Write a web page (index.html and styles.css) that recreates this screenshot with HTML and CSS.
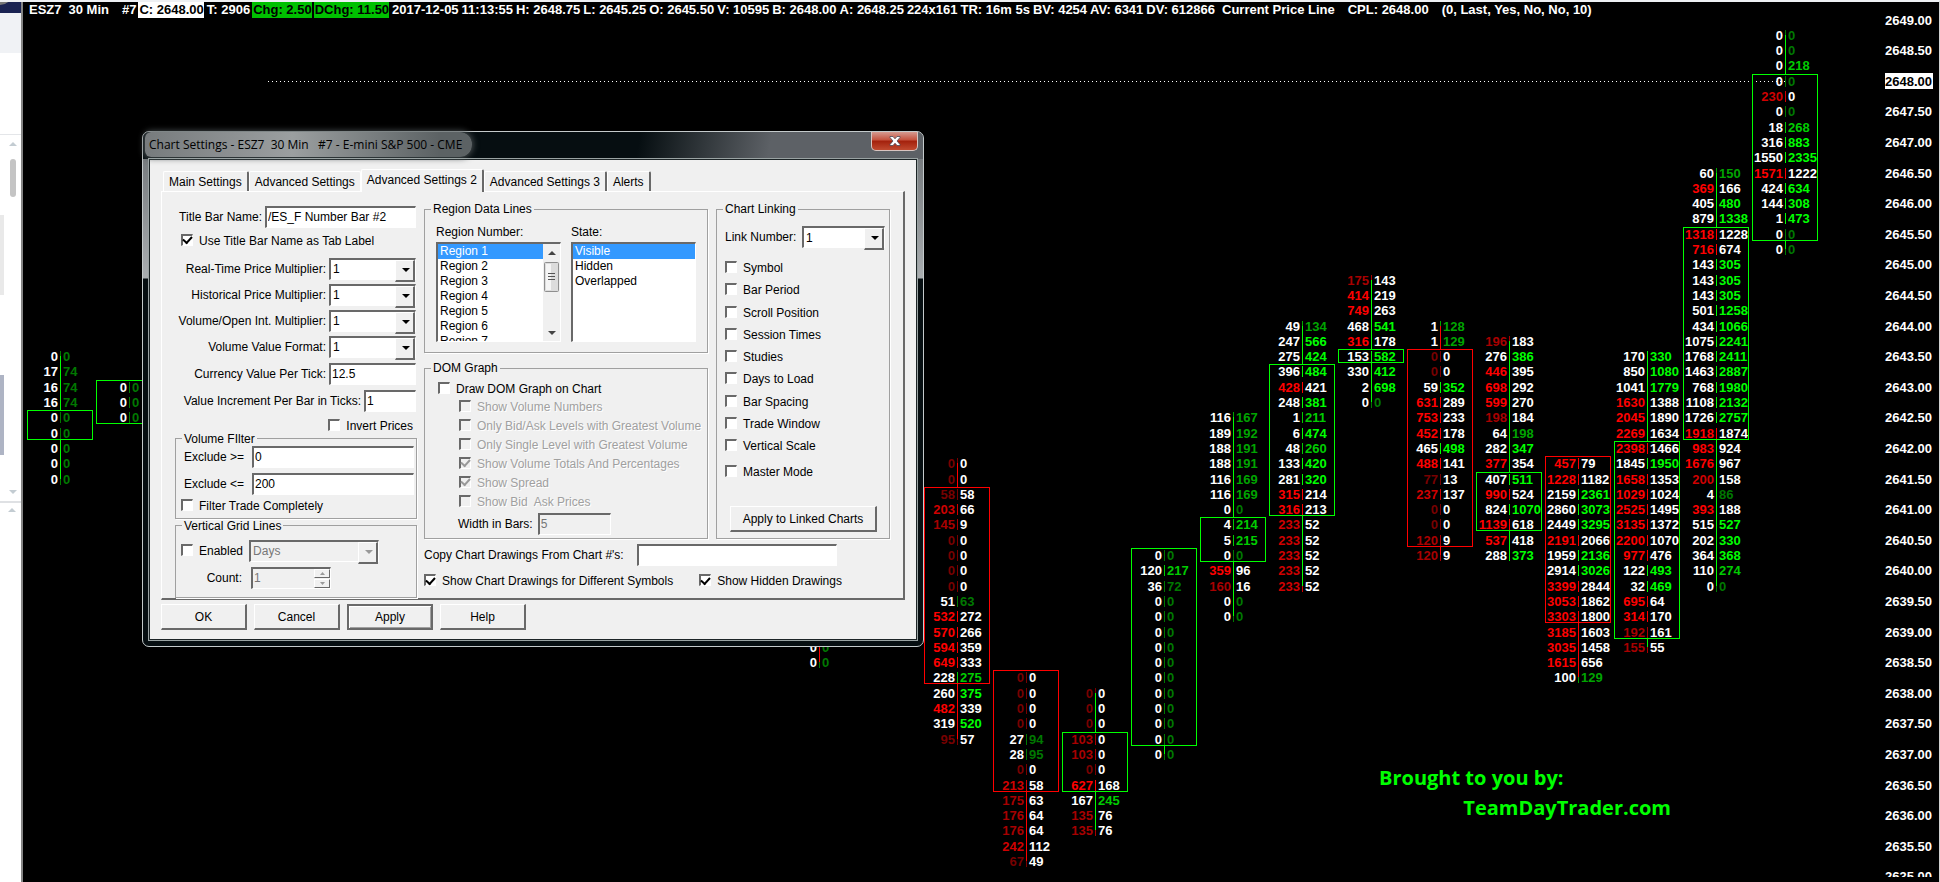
FILE: index.html
```html
<!DOCTYPE html>
<html lang="en">
<head>
    <meta charset="UTF-8">
    <meta name="viewport" content="width=device-width, initial-scale=1.0">
    <title>ESZ7 30 Min #7</title>
    <link rel="stylesheet" href="styles.css">
</head>
<body>
    <div class="desktop">
        <aside class="browser-edge">
            <svg width="21" height="882" viewBox="0 0 21 882">
                <rect width="21" height="11" fill="#1a2352"/>
                <circle cx="0" cy="-10" r="13" fill="#777"/>
                <rect y="11" width="21" height="40" fill="#f0f2f5"/>
                <rect y="132" width="21" height="1" fill="#e4e6e9"/>
                <path d="M9 144l4-4 4 4z" fill="#c3ccd2"/>
                <rect x="10" y="157" width="6" height="38" rx="3" fill="#c4c4c4"/>
                <rect y="213" width="4" height="80" fill="#e9e9e9"/>
                <rect y="373" width="4" height="80" fill="#aeb4c4"/>
                <path d="M9 488l4 4 4-4z" fill="#c3ccd2"/>
                <rect y="499" width="21" height="2" fill="#dfe1e4"/>
                <path d="M8 510l4-4 4 4z" fill="#c3ccd2"/>
            </svg>
        </aside>

        <main class="chart">
            <header class="status-line">
                <span>ESZ7</span><span class="wide">30 Min</span><span class="far">#7</span>
                <span class="tag last">C: 2648.00</span><span>T: 2906</span>
                <span class="tag up">Chg: 2.50</span><span class="tag up">DChg: 11.50</span>
                <span>2017-12-05</span><span>11:13:55</span><span>H: 2648.75</span><span>L: 2645.25</span><span>O: 2645.50</span><span>V: 10595</span><span>B: 2648.00</span><span>A: 2648.25</span><span>224x161</span><span>TR: 16m 5s</span><span>BV: 4254</span><span>AV: 6341</span><span>DV: 612866</span>
                <span class="wide">Current Price Line</span><span class="far">CPL: 2648.00</span><span class="far">(0, Last, Yes, No, No, 10)</span>
            </header>
            <svg class="bars" id="bars"></svg>
            <svg class="axis" id="axis"></svg>
            <div class="credit">
                <p>Brought to you by:</p>
                <p class="site">TeamDayTrader.com</p>
            </div>
        </main>
    </div>

    <div class="dialog" role="dialog" aria-labelledby="dialogTitle">
        <div class="title-bar">
            <span class="title" id="dialogTitle">Chart Settings - ESZ7&nbsp; 30 Min&nbsp;&nbsp; #7 - E-mini S&amp;P 500 - CME</span>
            <button type="button" class="close" aria-label="Close">
                <svg width="12" height="10" viewBox="0 0 12 10"><path d="M1 .5h3l2 2.300 2-2.300h3v1L8 5l3 3.500v1H8L6 7.200 4 9.500H1v-1L4 5 1 1.500z" fill="#fff" stroke="#4a4a58" stroke-width=".8"/></svg>
            </button>
        </div>
        <form class="client">
            <nav class="tabs">
                <button type="button" class="tab">Main Settings</button>
                <button type="button" class="tab">Advanced Settings</button>
                <button type="button" class="tab active">Advanced Settings 2</button>
                <button type="button" class="tab">Advanced Settings 3</button>
                <button type="button" class="tab">Alerts</button>
            </nav>

            <div class="panel">
                <div class="general">
                    <div class="row">
                        <label for="titleBar">Title Bar Name:</label>
                        <input class="field title-field" type="text" id="titleBar" value="/ES_F Number Bar #2">
                    </div>
                    <label class="check title-check"><input type="checkbox" checked>Use Title Bar Name as Tab Label</label>
                    <div class="row">
                        <label for="rtMult">Real-Time Price Multiplier:</label>
                        <span class="combo short"><select id="rtMult"><option>1</option></select></span>
                    </div>
                    <div class="row">
                        <label for="histMult">Historical Price Multiplier:</label>
                        <span class="combo short"><select id="histMult"><option>1</option></select></span>
                    </div>
                    <div class="row">
                        <label for="volMult">Volume/Open Int. Multiplier:</label>
                        <span class="combo short"><select id="volMult"><option>1</option></select></span>
                    </div>
                    <div class="row">
                        <label for="volFormat">Volume Value Format:</label>
                        <span class="combo short"><select id="volFormat"><option>1</option></select></span>
                    </div>
                    <div class="row text-row">
                        <label for="tickValue">Currency Value Per Tick:</label>
                        <input class="field short" type="text" id="tickValue" value="12.5">
                    </div>
                    <div class="row text-row">
                        <label for="increment">Value Increment Per Bar in Ticks:</label>
                        <input class="field tiny" type="text" id="increment" value="1">
                    </div>
                    <label class="check invert"><input type="checkbox">Invert Prices</label>
                    <fieldset class="volume-filter">
                        <legend>Volume FIlter</legend>
                        <div class="row">
                            <label for="excludeMin">Exclude &gt;=</label>
                            <input class="field" type="text" id="excludeMin" value="0">
                        </div>
                        <div class="row">
                            <label for="excludeMax">Exclude &lt;=</label>
                            <input class="field" type="text" id="excludeMax" value="200">
                        </div>
                        <label class="check"><input type="checkbox">Filter Trade Completely</label>
                    </fieldset>
                    <fieldset class="grid-lines">
                        <legend>Vertical Grid Lines</legend>
                        <div class="row">
                            <label class="check"><input type="checkbox">Enabled</label>
                            <span class="combo disabled"><select aria-label="Grid line unit" disabled><option>Days</option></select></span>
                        </div>
                        <div class="row">
                            <label class="count-label" for="count">Count:</label>
                            <span class="spinner">
                                <input class="field" type="text" id="count" value="1" disabled>
                                <span class="spin-buttons">
                                    <button type="button" aria-label="Up" disabled><svg width="5" height="3" viewBox="0 0 5 3"><path d="M0 3l2.500-3L5 3z" fill="#999"/></svg></button>
                                    <button type="button" aria-label="Down" disabled><svg width="5" height="3" viewBox="0 0 5 3"><path d="M0 0l2.500 3L5 0z" fill="#999"/></svg></button>
                                </span>
                            </span>
                        </div>
                    </fieldset>
                </div>

                <div class="extras">
                    <div class="groups">
                        <div class="middle">
                            <fieldset class="regions">
                                <legend>Region Data Lines</legend>
                                <div class="list-group">
                                    <label for="region">Region Number:</label>
                                    <div class="list">
                                        <select id="region" size="7">
                                            <option selected>Region 1</option>
                                            <option>Region 2</option>
                                            <option>Region 3</option>
                                            <option>Region 4</option>
                                            <option>Region 5</option>
                                            <option>Region 6</option>
                                            <option>Region 7</option>
                                        </select>
                                        <svg class="scroll" width="17" height="97" viewBox="0 0 17 97">
                                            <rect width="17" height="97" fill="#f0f0f0"/>
                                            <path d="M5 11l4-4 4 4z M5 87l4 4 4-4z" fill="#444"/>
                                            <rect x="1.500" y="18.500" width="14" height="29" rx="1" fill="#dcdcdc" stroke="#8f8f8f"/>
                                            <path d="M3 20h5v26H3z" fill="#f5f5f5"/>
                                            <path d="M5 29.500h7M5 32.500h7M5 35.500h7" stroke="#555"/>
                                        </svg>
                                    </div>
                                </div>
                                <div class="list-group">
                                    <label for="state">State:</label>
                                    <div class="list">
                                        <select id="state" size="7">
                                            <option selected>Visible</option>
                                            <option>Hidden</option>
                                            <option>Overlapped</option>
                                        </select>
                                    </div>
                                </div>
                            </fieldset>
                            <fieldset class="dom">
                                <legend>DOM Graph</legend>
                                <label class="check"><input type="checkbox">Draw DOM Graph on Chart</label>
                                <div class="dom-options">
                                    <label class="check"><input type="checkbox" disabled>Show Volume Numbers</label>
                                    <label class="check"><input type="checkbox" disabled>Only Bid/Ask Levels with Greatest Volume</label>
                                    <label class="check"><input type="checkbox" disabled>Only Single Level with Greatest Volume</label>
                                    <label class="check"><input type="checkbox" disabled checked>Show Volume Totals And Percentages</label>
                                    <label class="check"><input type="checkbox" disabled checked>Show Spread</label>
                                    <label class="check"><input type="checkbox" disabled>Show Bid&nbsp; Ask Prices</label>
                                </div>
                                <div class="dom-width">
                                    <label for="domWidth">Width in Bars:</label>
                                    <input class="field" type="text" id="domWidth" value="5" disabled>
                                </div>
                            </fieldset>
                        </div>

                        <fieldset class="linking">
                            <legend>Chart Linking</legend>
                            <div class="row">
                                <label for="linkNumber">Link Number:</label>
                                <span class="combo"><select id="linkNumber"><option>1</option></select></span>
                            </div>
                            <div class="link-options">
                                <label class="check"><input type="checkbox">Symbol</label>
                                <label class="check"><input type="checkbox">Bar Period</label>
                                <label class="check"><input type="checkbox">Scroll Position</label>
                                <label class="check"><input type="checkbox">Session Times</label>
                                <label class="check"><input type="checkbox">Studies</label>
                                <label class="check"><input type="checkbox">Days to Load</label>
                                <label class="check"><input type="checkbox">Bar Spacing</label>
                                <label class="check"><input type="checkbox">Trade Window</label>
                                <label class="check"><input type="checkbox">Vertical Scale</label>
                            </div>
                            <label class="check master"><input type="checkbox">Master Mode</label>
                            <button type="button" class="btn link-btn">Apply to Linked Charts</button>
                        </fieldset>
                    </div>
                    <div class="copy-row">
                        <label for="copyFrom">Copy Chart Drawings From Chart #'s:</label>
                        <input class="field" type="text" id="copyFrom">
                    </div>
                    <div class="drawing-row">
                        <label class="check"><input type="checkbox" checked>Show Chart Drawings for Different Symbols</label>
                        <label class="check"><input type="checkbox" checked>Show Hidden Drawings</label>
                    </div>
                </div>
            </div>

            <div class="actions">
                <button type="button" class="btn">OK</button>
                <button type="button" class="btn">Cancel</button>
                <button type="button" class="btn default">Apply</button>
                <button type="button" class="btn">Help</button>
            </div>
        </form>
    </div>

    <script src="chart.js"></script>
</body>
</html>
```

FILE: styles.css
```css
:root {
    --face: #f0f0f0;
    --shadow: #a0a0a0;
    --dark: #696969;
    --blue: #3399ff;
    --up: #00ff00;
    --down: #ff0000;
}
* {
    box-sizing: border-box;
}
body {
    margin: 0;
    height: 100vh;
    overflow: hidden;
    background: #000;
    font-family: "Liberation Sans", Arial, sans-serif;
    font-size: 12px;
    line-height: 14px;
}
.desktop {
    display: flex;
    height: 100vh;
    border-top: 2px solid #eef0f3;
    border-right: 1px solid #d0d0d0;
}
.browser-edge {
    width: 23px;
    flex: none;
    background: #fff;
    border-right: 2px solid #858585;
    overflow: hidden;
}
.browser-edge svg {
    display: block;
}

/* chart */
.chart {
    flex: 1;
    position: relative;
    display: flex;
    margin-bottom: 5px;
    overflow: hidden;
    color: #fff;
    font-size: 13px;
    font-weight: bold;
}
.bars {
    flex: 1;
    height: 100%;
}
.axis {
    width: 64px;
    height: 100%;
}
.status-line {
    position: absolute;
    top: 0;
    left: 6px;
    display: flex;
    gap: 3px;
    line-height: 16px;
    white-space: nowrap;
}
.status-line .wide {
    margin-left: 4px;
}
.status-line .far {
    margin-left: 10px;
}
.tag {
    margin-left: -1px;
    padding-left: 1px;
}
.tag.last {
    background: #fff;
    color: #000;
}
.tag.up {
    background: #00c000;
    color: #000;
}
.bars text, .axis text {
    fill: #fff;
}
.axis .current {
    fill: #000;
}
.axis text, .bars .bid {
    text-anchor: end;
}
.red0 { fill: #780000 !important; }
.red1 { fill: #a80000 !important; }
.red2 { fill: #d00000 !important; }
.red3 { fill: #ff0000 !important; }
.green0 { fill: #007800 !important; }
.green1 { fill: #00a400 !important; }
.green2 { fill: #00cc00 !important; }
.green3 { fill: #00ff00 !important; }
.body-box {
    fill: none;
}
.body-box.up { stroke: var(--up); }
.body-box.down { stroke: var(--down); }
.wick.up { fill: var(--up); }
.wick.down { fill: var(--down); }
.price-line {
    stroke: #fff;
    stroke-dasharray: 1 3;
}
.credit {
    position: absolute;
    right: 268px;
    bottom: 54px;
    width: 292px;
    color: var(--up);
    font: bold 20px/30px "Open Sans", sans-serif;
}
.credit p {
    margin: 0;
}
.credit .site {
    text-align: right;
}

/* dialog window */
.dialog {
    position: absolute;
    left: 142px;
    top: 131px;
    width: 782px;
    padding: 0 6px 6px;
    border: 1px solid #c4cacb;
    border-radius: 7px;
    background: linear-gradient(#6d7275 0, #85898c 60px, #a9adb0 146px, #060e11 147px);
}
.title-bar {
    display: flex;
    justify-content: space-between;
    align-items: flex-start;
    height: 27px;
    margin: 0 -6px;
    padding: 0 5px 0 2px;
    border-radius: 6px 6px 0 0;
    background: linear-gradient(100deg, #060e11 0, #060e11 490px, #5d6166 620px, #5d6166 100%);
}
.title {
    padding: 0 10px 0 4px;
    border-radius: 6px 12px 12px 6px;
    background: linear-gradient(90deg, #777b7d, #9b9fa0 45%, #5c6264 90%);
    box-shadow: 0 0 6px 1px #4c5254;
    font: 12px/25px "Open Sans", sans-serif;
    color: #000;
}
.close {
    width: 47px;
    height: 19px;
    padding: 0;
    border: 1px solid #d8c4c0;
    border-top: 0;
    border-radius: 0 0 5px 5px;
    background: linear-gradient(#d59a90 0, #c4503c 45%, #a3200c 50%, #c04a30 100%);
    line-height: 0;
}
.client {
    padding: 9px 11px 9px;
    border: 1px solid #1c2426;
    outline: 1px solid #9aa3a3;
    background: var(--face);
}
.tabs {
    display: flex;
    align-items: flex-end;
    padding-left: 2px;
}
.tab {
    height: 20px;
    padding: 0 5px;
    border: 1px solid #fff;
    border-right: 2px solid var(--dark);
    border-bottom: 0;
    border-radius: 2px 2px 0 0;
    background: var(--face);
    font: 12px/20px "Liberation Sans", Arial, sans-serif;
    color: #000;
}
.tab:nth-child(2) {
    border-right-width: 1px;
    border-right-color: #fff;
}
.tab.active {
    position: relative;
    height: 23px;
    margin-bottom: -1px;
    padding: 0 5px 3px;
}
.panel {
    display: flex;
    gap: 7px;
    height: 409px;
    padding: 10px 13px 0;
    border: 1px solid #fff;
    border-right: 2px solid var(--dark);
    border-bottom: 2px solid var(--dark);
}
.general {
    width: 242px;
    display: flex;
    flex-direction: column;
}
.extras {
    flex: 1;
}
.row {
    display: flex;
    align-items: center;
    justify-content: flex-end;
    gap: 3px;
    height: 22px;
    margin-bottom: 4px;
}
.general > .row {
    padding-right: 1px;
}
.general > .row:first-child {
    margin: 4px 0 3px;
}
.general > .text-row {
    margin-top: 1px;
}
.field, .combo, .list {
    border: 1px solid #fff;
    border-top: 2px solid var(--dark);
    border-left: 2px solid var(--dark);
    background: #fff;
}
.field {
    height: 22px;
    padding: 0 1px 1px;
    font: 12px/14px "Liberation Sans", Arial, sans-serif;
    color: #000;
    border-radius: 0;
}
.field:disabled {
    background: var(--face);
    color: #777;
}
.title-field { width: 151px; }
.short { width: 87px; }
.tiny { width: 52px; }
.combo {
    position: relative;
    display: flex;
    height: 22px;
}
.combo select {
    appearance: none;
    width: 100%;
    padding: 0 2px;
    border: 0;
    border-radius: 0;
    background: transparent;
    font: 12px/14px "Liberation Sans", Arial, sans-serif;
    color: #000;
    outline: none;
}
.combo::before {
    content: "";
    position: absolute;
    top: 0;
    right: 0;
    width: 17px;
    height: 19px;
    border: 1px solid #fff;
    border-right: 2px solid var(--dark);
    border-bottom: 2px solid var(--dark);
    background: var(--face);
    pointer-events: none;
}
.combo::after {
    content: "";
    position: absolute;
    top: 8px;
    right: 5px;
    border: 4px solid transparent;
    border-top-color: #000;
    border-bottom: 0;
    pointer-events: none;
}
.combo.disabled {
    background: var(--face);
}
.combo.disabled select {
    color: #777;
    opacity: 1;
}
.combo.disabled::after {
    border-top-color: #999;
}
.check {
    display: flex;
    align-items: center;
    gap: 6px;
}
.check input {
    appearance: none;
    width: 12px;
    height: 12px;
    margin: 0 0 2px;
    border: 1px solid #fff;
    border-top: 2px solid var(--dark);
    border-left: 2px solid var(--dark);
    background: #fff;
    display: grid;
    place-items: center;
}
.check input:checked::before {
    content: "";
    width: 7px;
    height: 4px;
    border-left: 2px solid #000;
    border-bottom: 2px solid #000;
    transform: translateY(-1px) rotate(-48deg);
}
.check input:disabled {
    background: var(--face);
}
.check input:disabled::before {
    border-color: #999;
}
.check:has(input:disabled) {
    color: #a0a0a0;
    text-shadow: 1px 1px #fff;
}
.title-check {
    height: 16px;
    margin: 2px 0 9px 6px;
}
.invert {
    align-self: flex-end;
    margin: 3px 4px 0 0;
    height: 14px;
}
fieldset {
    --pad: 8px;
    min-width: 0;
    margin: 0;
    padding: 0 0 0 var(--pad);
    border: 1px solid var(--shadow);
    box-shadow: 1px 1px #fff;
}
legend {
    margin-left: calc(6px - var(--pad));
    padding: 0 2px;
    line-height: 14px;
}
.volume-filter {
    height: 88px;
    margin-top: -1px;
    padding-right: 2px;
}
.volume-filter .row {
    justify-content: space-between;
    margin-bottom: 5px;
}
.volume-filter .field {
    width: 162px;
}
.volume-filter .check {
    margin: -1px 0 0 -3px;
}
.grid-lines {
    --pad: 5px;
    height: 80px;
    padding-top: 7px;
}
.grid-lines .row {
    justify-content: flex-start;
    gap: 6px;
    margin-bottom: 5px;
}
.grid-lines .combo {
    width: 130px;
}
.count-label {
    width: 61px;
    text-align: right;
}
.spinner {
    position: relative;
    margin-left: 3px;
}
.spinner .field {
    display: block;
    width: 80px;
}
.spin-buttons {
    position: absolute;
    top: 2px;
    right: 1px;
    display: grid;
    gap: 1px;
}
.spin-buttons button {
    display: grid;
    place-items: center;
    width: 16px;
    height: 9px;
    padding: 0;
    border: 1px solid #fff;
    border-right-color: var(--dark);
    border-bottom-color: var(--dark);
    background: var(--face);
}
.groups {
    display: flex;
    justify-content: space-between;
}
.middle {
    width: 284px;
}
.regions {
    --pad: 11px;
    display: flex;
    gap: 10px;
    height: 151px;
    padding-top: 9px;
}
.list-group {
    width: 125px;
}
.list {
    display: flex;
    height: 100px;
    margin-top: 3px;
    overflow: hidden;
}
.list select {
    flex: 1;
    min-width: 0;
    height: 106px;
    padding: 0;
    border: 0;
    border-radius: 0;
    background: #fff;
    font: 12px/15px "Liberation Sans", Arial, sans-serif;
    color: #000;
    overflow: hidden;
    outline: none;
}
.list option {
    min-height: 15px;
    padding: 0 2px;
}
.list option:checked {
    background: linear-gradient(var(--blue), var(--blue));
    color: #fff;
}
.scroll {
    flex: none;
}
.dom {
    --pad: 13px;
    height: 178px;
    margin-top: 8px;
    padding-top: 6px;
}
.dom .check {
    height: 15px;
}
.dom-options {
    display: grid;
    gap: 4px;
    margin: 3px 0 0 21px;
    white-space: nowrap;
}
.dom-width {
    display: flex;
    align-items: center;
    gap: 5px;
    margin: 4px 0 0 20px;
}
.dom-width .field {
    width: 73px;
}
.linking {
    width: 174px;
    height: 337px;
    padding-top: 10px;
    padding-right: 4px;
}
.linking .row {
    justify-content: space-between;
}
.linking .combo {
    width: 83px;
}
.link-options {
    display: flex;
    flex-direction: column;
    justify-content: space-between;
    height: 192px;
    margin-top: 13px;
}
.master {
    margin: 12px 0 27px;
}
.btn {
    width: 86px;
    height: 26px;
    padding: 0;
    border: 1px solid #fff;
    border-right: 2px solid var(--dark);
    border-bottom: 2px solid var(--dark);
    background: var(--face);
    font: 12px/14px "Liberation Sans", Arial, sans-serif;
    color: #000;
}
.btn.default {
    border: 2px solid var(--dark);
    box-shadow: inset 1px 1px #fff, inset -1px -1px var(--shadow);
}
.link-btn {
    display: block;
    width: 147px;
    margin-left: 5px;
}
.copy-row {
    display: flex;
    align-items: center;
    gap: 13px;
    margin-top: 5px;
}
.copy-row .field {
    width: 200px;
}
.drawing-row {
    display: flex;
    gap: 26px;
    margin-top: 8px;
}
.actions {
    display: flex;
    gap: 7px;
    margin-top: 4px;
}
```

FILE: chart.js
```javascript
const NS = 'http://www.w3.org/2000/svg';
const TOP_PRICE = 2649;
const TICK = 0.25;
const ROW = 15.3;
const FIRST_Y = 18;
const BAR_STEP = 69;
const FIRST_X = 37;

// slot, side, first row, body rows, "bid|ask" per row going down
const bars = [
    { slot: 0, up: true, row: 22, body: [26, 27], cells: '0|0 17|74 16|74 16|74 0|0 0|0 0|0 0|0 0|0' },
    { slot: 1, up: true, row: 24, body: [24, 26], cells: '0|0 0|0 0|0' },
    { slot: 11, up: false, zeroUp: true, row: 38, body: [38, 38], cells: '0|0 0|0 0|0 0|0 0|0' },
    { slot: 13, up: false, row: 29, body: [31, 43], cells: '0|0 0|0 58|58 203|66 145|9 0|0 0|0 0|0 0|0 51|63 532|272 570|266 594|359 649|333 228|275 260|375 482|339 319|520 95|57' },
    { slot: 14, up: false, row: 43, body: [43, 50], cells: '0|0 0|0 0|0 0|0 27|94 28|95 0|0 213|58 175|63 176|64 176|64 242|112 67|49' },
    { slot: 15, up: true, zeroUp: false, row: 44, body: [47, 50], cells: '0|0 0|0 0|0 103|0 103|0 0|0 627|168 167|245 135|76 135|76' },
    { slot: 16, up: true, row: 35, body: [35, 47], cells: '0|0 120|217 36|72 0|0 0|0 0|0 0|0 0|0 0|0 0|0 0|0 0|0 0|0 0|0' },
    { slot: 17, up: true, row: 26, body: [33, 35], cells: '116|167 189|192 188|191 188|191 116|169 116|169 0|0 4|214 5|215 0|0 359|96 160|16 0|0 0|0' },
    { slot: 18, up: true, row: 20, body: [23, 32], cells: '49|134 247|566 275|424 396|484 428|421 248|381 1|211 6|474 48|260 133|420 281|320 315|214 316|213 233|52 233|52 233|52 233|52 233|52' },
    { slot: 19, up: true, row: 17, body: [22, 22], cells: '175|143 414|219 749|263 468|541 316|178 153|582 330|412 2|698 0|0' },
    { slot: 20, up: false, row: 20, body: [22, 34], cells: '1|128 1|129 0|0 0|0 59|352 631|289 753|233 452|178 465|498 488|141 77|13 237|137 0|0 0|0 120|9 120|9' },
    { slot: 21, up: true, row: 21, body: [30, 33], cells: '196|183 276|386 446|395 698|292 599|270 198|184 64|198 282|347 377|354 407|511 990|524 824|1070 1139|618 537|418 288|373' },
    { slot: 22, up: false, row: 29, body: [29, 39], cells: '457|79 1228|1182 2159|2361 2860|3073 2449|3295 2191|2066 1959|2136 2914|3026 3399|2844 3053|1862 3303|1800 3185|1603 3035|1458 1615|656 100|129' },
    { slot: 23, up: true, row: 22, body: [28, 40], cells: '170|330 850|1080 1041|1779 1630|1388 2045|1890 2269|1634 2398|1466 1845|1950 1658|1353 1029|1024 2525|1495 3135|1372 2200|1070 977|476 122|493 32|469 695|64 314|170 192|161 155|55' },
    { slot: 24, up: true, row: 10, body: [14, 27], cells: '60|150 369|166 405|480 879|1338 1318|1228 716|674 143|305 143|305 143|305 501|1258 434|1066 1075|2241 1768|2411 1463|2887 768|1980 1108|2132 1726|2757 1918|1874 983|924 1676|967 200|158 4|86 393|188 515|527 202|330 364|368 110|274 0|0' },
    { slot: 25, up: true, row: 1, body: [4, 14], cells: '0|0 0|0 0|218 0|0 230|0 0|0 18|268 316|883 1550|2335 1571|1222 424|634 144|308 1|473 0|0 0|0' }
];

function add(parent, tag, attrs, text) {
    const el = document.createElementNS(NS, tag);
    for (const key in attrs) el.setAttribute(key, attrs[key]);
    if (text !== undefined) el.textContent = text;
    parent.appendChild(el);
    return el;
}

function rowY(row) {
    return Math.floor(FIRST_Y + row * ROW);
}

function shade(value) {
    return Math.min(3, Math.floor(value / 100));
}

function drawBar(svg, bar) {
    const x = FIRST_X + bar.slot * BAR_STEP;
    const side = bar.up ? 'up' : 'down';
    const zeroUp = bar.zeroUp === undefined ? bar.up : bar.zeroUp;
    const cells = bar.cells.split(' ');

    cells.forEach((cell, i) => {
        const [bid, ask] = cell.split('|').map(Number);
        const y = rowY(bar.row + i);
        const askWins = ask > bid || (ask === bid && zeroUp);
        const color = askWins ? 'green' + shade(ask) : 'red' + shade(bid);
        add(svg, 'rect', { x: x, y: y - 5, width: 1, height: 11, class: color });
        add(svg, 'text', { x: x - 2, y: y + 5, class: askWins ? 'bid' : 'bid ' + color }, bid);
        add(svg, 'text', { x: x + 3, y: y + 5, class: askWins ? color : '' }, ask);
    });

    const top = rowY(bar.body[0]) - 7;
    const bottom = rowY(bar.body[1]) + 7;
    const high = rowY(bar.row);
    const low = rowY(bar.row + cells.length - 1);
    if (high < top) add(svg, 'rect', { x: x, y: high, width: 1, height: top - high, class: 'wick ' + side });
    if (low > bottom) add(svg, 'rect', { x: x, y: bottom, width: 1, height: low - bottom, class: 'wick ' + side });
    add(svg, 'rect', { x: x - 32.5, y: top + 0.5, width: 65, height: bottom - top - 1, class: 'body-box ' + side });
}

const chart = document.getElementById('bars');
add(chart, 'line', { x1: 245, x2: 1764, y1: rowY(4) + 0.5, y2: rowY(4) + 0.5, class: 'price-line' });
bars.forEach(bar => drawBar(chart, bar));

const axis = document.getElementById('axis');
for (let row = 0; row <= 56; row += 2) {
    const price = TOP_PRICE - row * TICK;
    const y = rowY(row);
    if (price === 2648) add(axis, 'rect', { x: 10, y: y - 8, width: 48, height: 16, fill: '#fff' });
    add(axis, 'text', { x: 57, y: y + 5, class: price === 2648 ? 'current' : '' }, price.toFixed(2));
}
```
